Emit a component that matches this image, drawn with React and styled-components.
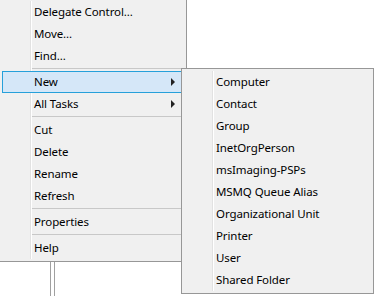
import React from "react";
import styled, { createGlobalStyle } from "styled-components";

const GlobalStyle = createGlobalStyle`
    html, body {
        margin: 0;
        padding: 0;
        background: #ffffff;
    }
    body {
        font-family: "Segoe UI", "Noto Sans", "Open Sans", sans-serif;
        font-size: 11.5px;
        letter-spacing: -0.1px;
        color: #000000;
    }
`;

const mainItems = [
    { label: "Delegate Control..." },
    { label: "Move..." },
    { label: "Find..." },
    { separator: true },
    { label: "New", submenu: true, active: true },
    { label: "All Tasks", submenu: true },
    { separator: true },
    { label: "Cut" },
    { label: "Delete" },
    { label: "Rename" },
    { label: "Refresh" },
    { separator: true },
    { label: "Properties" },
    { separator: true },
    { label: "Help" },
];

const newItems = [
    "Computer",
    "Contact",
    "Group",
    "InetOrgPerson",
    "msImaging-PSPs",
    "MSMQ Queue Alias",
    "Organizational Unit",
    "Printer",
    "User",
    "Shared Folder",
];

function MenuEntries({ items }) {
    return items.map((it, i) =>
        it.separator ? (
            <Separator key={i} />
        ) : (
            <Item key={i} $active={it.active}>
                <span>{it.label}</span>
                {it.submenu ? <Arrow /> : null}
            </Item>
        )
    );
}

export default function App() {
    return (
        <>
            <GlobalStyle />
            <Screen>
                <Splitter />
                <MainMenu>
                    <MenuList>
                        <MenuEntries items={mainItems} />
                    </MenuList>
                </MainMenu>
                <SubMenu>
                    <MenuList>
                        <MenuEntries items={newItems.map((label) => ({ label }))} />
                    </MenuList>
                </SubMenu>
            </Screen>
        </>
    );
}

const Screen = styled.div`
    position: relative;
    width: 376px;
    height: 296px;
    overflow: hidden;
    background: #ffffff;
    display: flex;
    padding-left: 50px;
    box-sizing: border-box;
`;

const Splitter = styled.div`
    width: 3px;
    height: 100%;
    border-left: 1px solid #a0a0a0;
    border-right: 1px solid #a0a0a0;
`;

const Panel = styled.div`
    position: absolute;
    box-sizing: border-box;
    background: #f0f0f0;
    border: 1px solid #979797;
    padding: 2px;
`;

const MainMenu = styled(Panel)`
    left: -1px;
    top: -2px;
    width: 188px;
`;

const SubMenu = styled(Panel)`
    left: 181px;
    top: 68px;
    width: 193px;
`;

const MenuList = styled.div`
    display: flex;
    flex-direction: column;
    background: linear-gradient(
        to right,
        transparent 28px,
        #e2e2e2 28px,
        #e2e2e2 29px,
        #ffffff 29px,
        #ffffff 30px,
        transparent 30px
    );
`;

const Item = styled.div`
    height: 22px;
    box-sizing: border-box;
    display: flex;
    align-items: center;
    justify-content: space-between;
    padding: 0 8px 1px 31px;
    white-space: nowrap;
    border: 1px solid ${(p) => (p.$active ? "#26a0da" : "transparent")};
    background: ${(p) => (p.$active ? "#d5e7f8" : "transparent")};
`;

const Arrow = styled.span`
    width: 0;
    height: 0;
    border-top: 4px solid transparent;
    border-bottom: 4px solid transparent;
    border-left: 4px solid #222222;
`;

const Separator = styled.div`
    height: 4px;
    box-sizing: border-box;
    padding-top: 1px;
    margin-left: 30px;
    &::after {
        content: "";
        display: block;
        height: 1px;
        background: #c8c8c8;
    }
`;
